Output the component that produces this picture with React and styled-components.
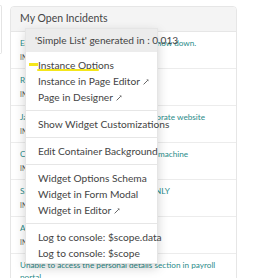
import React from 'react';
import styled, { createGlobalStyle } from 'styled-components';

const Global = createGlobalStyle`
  html, body { margin: 0; padding: 0; background: #fff; }
  body {
    font-family: Lato, "Open Sans", sans-serif;
    width: 254px;
    height: 278px;
    overflow: hidden;
  }
  * { box-sizing: border-box; }
`;

const Page = styled.div`
  display: flex;
  align-items: flex-start;
  gap: 8px;
  padding-top: 6px;
  height: 278px;
  overflow: hidden;
`;

const SideCard = styled.div`
  flex: 0 0 2px;
  width: 2px;
  height: 49px;
  margin-top: -1px;
  border: 1px solid #e4e4e4;
  border-left: none;
  border-radius: 0 4px 4px 0;
  background: #fff;
`;

const Panel = styled.section`
  position: relative;
  flex: 0 0 227px;
  width: 227px;
  border: 1px solid #e6e6e6;
  border-radius: 4px;
  background: #fff;
`;

const PanelHeader = styled.h2`
  margin: 0;
  padding: 4px 9px 5px;
  background: #f4f4f4;
  border-bottom: 1px solid #e6e6e6;
  border-radius: 4px 4px 0 0;
  font-size: 10.5px;
  font-weight: 400;
  line-height: 15px;
  color: #444;
`;

const Row = styled.div`
  padding: 5px 9px 6px;
  border-bottom: 1px solid #ececec;
`;

const Title = styled.a`
  display: block;
  color: #2a8c8a;
  font-size: 8.2px;
  line-height: 12px;
  text-decoration: none;
`;

const Meta = styled.div`
  margin-top: 3px;
  font-size: 6.8px;
  line-height: 10px;
  color: #555;
  text-transform: uppercase;
`;

const Menu = styled.div`
  position: absolute;
  left: 14px;
  top: 21px;
  width: 133px;
  background: #fff;
  border: 1px solid rgba(0, 0, 0, 0.1);
  box-shadow: 0 4px 10px rgba(0, 0, 0, 0.18);
  padding-bottom: 2px;
  z-index: 2;
`;

const MenuHeader = styled.div`
  height: 23px;
  line-height: 23px;
  padding: 0 9px;
  background: #ececec;
  font-size: 10.1px;
  color: #444;
  white-space: nowrap;
`;

const MenuList = styled.ul`
  list-style: none;
  margin: 0;
  padding: 5px 0 0;
`;

const MenuItem = styled.li`
  padding: 0 12px;
  font-size: 10.2px;
  line-height: 16px;
  color: #444;
  white-space: nowrap;
`;

const Divider = styled.li`
  height: 1px;
  margin: 5px 0;
  background: #e6e6e6;
`;

const Marked = styled.span`
  position: relative;
  display: inline-block;
  &::before {
    content: '';
    position: absolute;
    left: -9px;
    top: 5.5px;
    width: 9px;
    height: 3.5px;
    background: #f4e61a;
  }
  &::after {
    content: '';
    position: absolute;
    left: -1px;
    top: 11.5px;
    width: 62px;
    height: 2px;
    border-radius: 1px;
    background: #f4e61a;
  }
`;

const ExtIcon = () => (
  <svg width="6" height="6" viewBox="0 0 6 6" style={{ marginLeft: 3, verticalAlign: 0 }}>
    <path d="M0.6 5.4 L4.6 1.4" stroke="#555" strokeWidth="0.9" fill="none" />
    <path d="M3.4 0.6 L5.4 0.6 L5.4 2.6 Z" fill="#555" />
  </svg>
);

const incidents = [
  ['Employee payroll application server is now down.', 'INC0000046'],
  ['Reset my password', 'INC0000050'],
  ['JavaScript error on hiring page of corporate website', 'INC0000025'],
  ["Can't launch 64-bit Windows 7 virtual machine", 'INC0000027'],
  ['Sales forecast spreadsheet is READ ONLY', 'INC0000039'],
  ['Assist with new laptop', 'INC0000057'],
  ['Unable to access the personal details section in payroll portal', 'INC0010002'],
];

export default function App() {
  return (
    <>
      <Global />
      <Page>
        <SideCard />
        <Panel>
          <PanelHeader>My Open Incidents</PanelHeader>
          {incidents.map(([t, n]) => (
            <Row key={n}>
              <Title href="#">{t}</Title>
              <Meta>{n}</Meta>
            </Row>
          ))}
          <Menu>
            <MenuHeader>'Simple List' generated in : 0.013</MenuHeader>
            <MenuList>
              <MenuItem><Marked>Instance Options</Marked></MenuItem>
              <MenuItem>Instance in Page Editor<ExtIcon /></MenuItem>
              <MenuItem>Page in Designer<ExtIcon /></MenuItem>
              <Divider />
              <MenuItem>Show Widget Customizations</MenuItem>
              <Divider />
              <MenuItem>Edit Container Background</MenuItem>
              <Divider />
              <MenuItem>Widget Options Schema</MenuItem>
              <MenuItem>Widget in Form Modal</MenuItem>
              <MenuItem>Widget in Editor<ExtIcon /></MenuItem>
              <Divider />
              <MenuItem>Log to console: $scope.data</MenuItem>
              <MenuItem>Log to console: $scope</MenuItem>
            </MenuList>
          </Menu>
        </Panel>
      </Page>
    </>
  );
}
